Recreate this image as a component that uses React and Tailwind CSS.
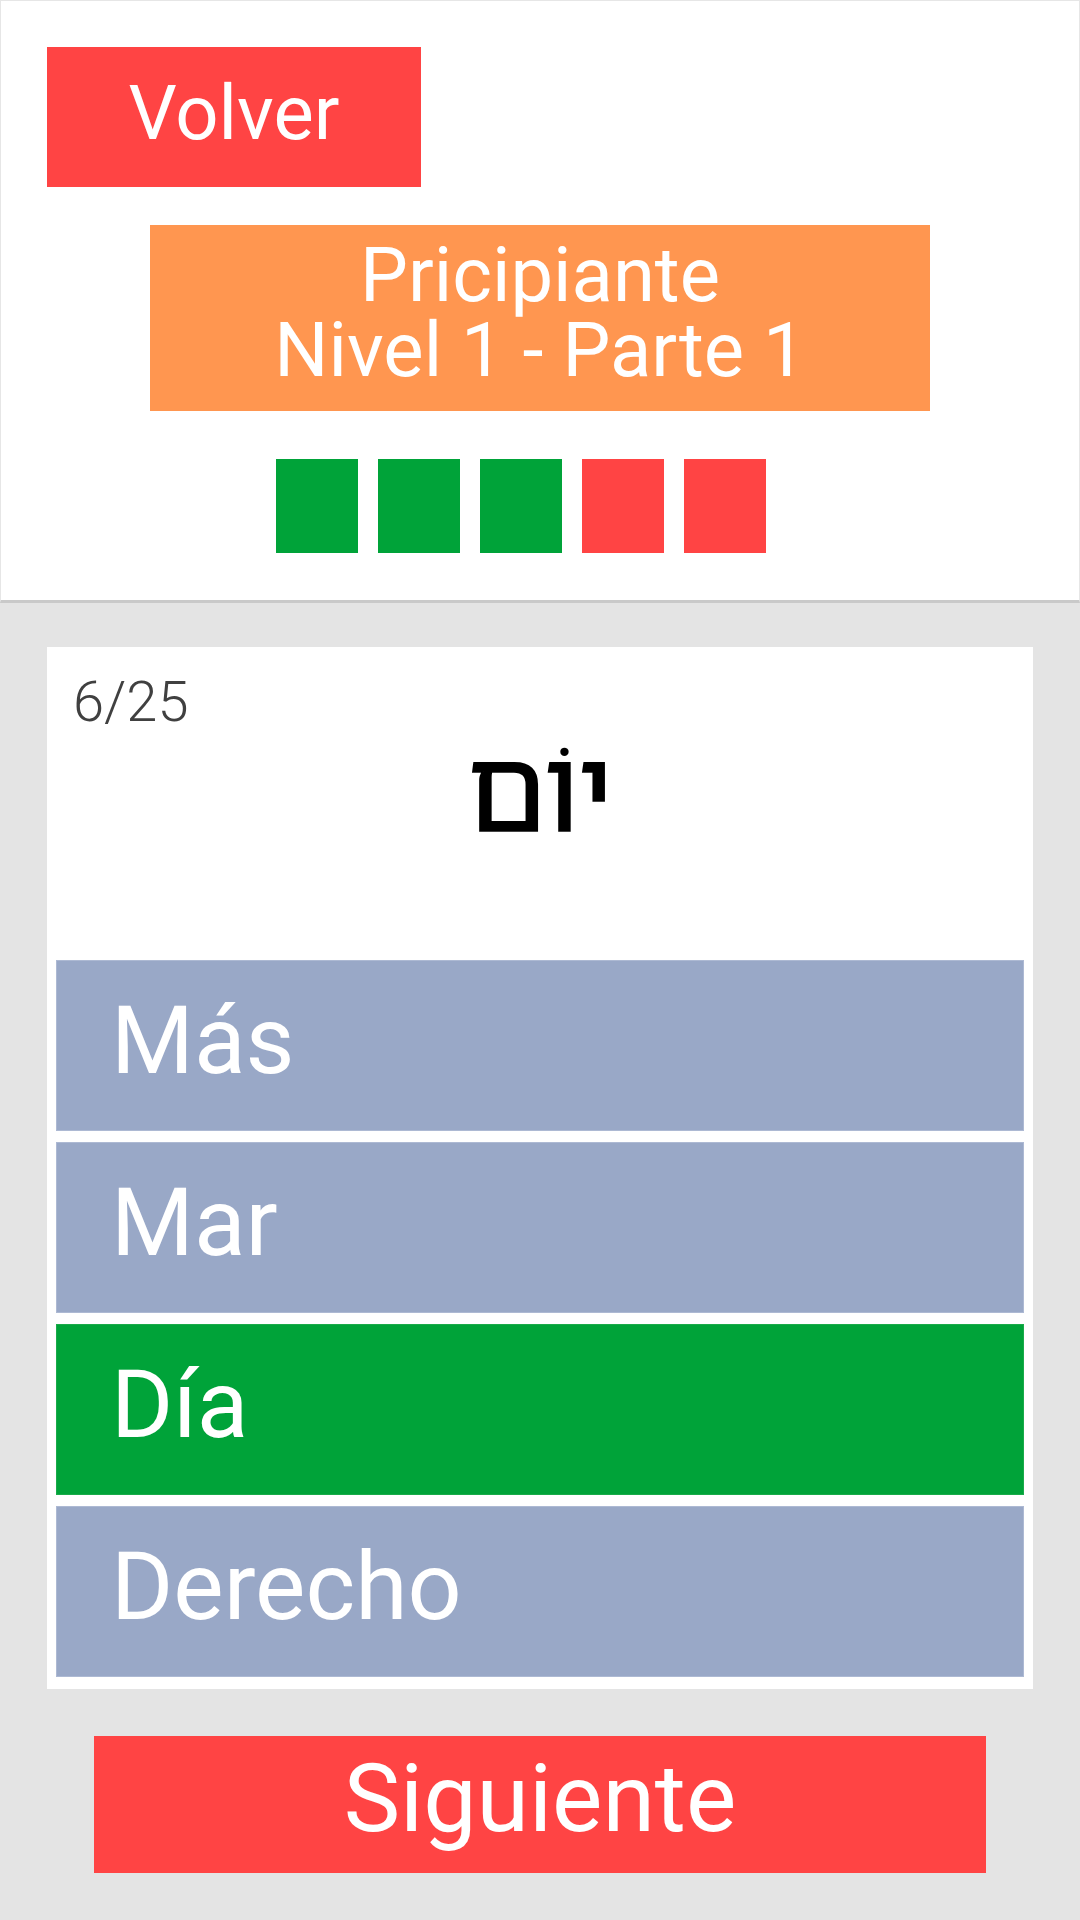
import React from "react";

const squares = ["bg-[#00a339]", "bg-[#00a339]", "bg-[#00a339]", "bg-[#ff4444]", "bg-[#ff4444]"];

const options = [
  { label: "Más", ok: false },
  { label: "Mar", ok: false },
  { label: "Día", ok: true },
  { label: "Derecho", ok: false },
];

export default function App() {
  return (
    <div className="w-[1080px] h-[1920px] flex flex-col bg-[#e4e4e4] font-['Roboto','Noto_Sans',sans-serif] overflow-hidden">
      {/* Header */}
      <div className="bg-white border border-[#e6e6e6] border-b-[3px] border-b-[#c9c9c9] px-[46px] pt-[46px] pb-[47px] flex flex-col">
        <div className="w-[374px] h-[140px] bg-[#ff4444] text-white text-[76px] leading-none flex items-center justify-center pb-[8px]">
          Volver
        </div>

        <div className="mt-[38px] mx-auto w-[780px] h-[186px] bg-[#ff9650] text-white text-[76px] leading-[75px] text-center pt-[13px]">
          <div>Pricipiante</div>
          <div>Nivel 1 - Parte 1</div>
        </div>

        <div className="mt-[48px] flex justify-center gap-[20px] pr-[38px]">
          {squares.map((c, i) => (
            <div key={i} className={`w-[82px] h-[94px] ${c}`} />
          ))}
        </div>
      </div>

      {/* Quiz */}
      <div className="px-[47px] pt-[44px] flex flex-col">
        <div className="bg-white h-[1042px] px-[9px] pb-[9px] flex flex-col">
          <div className="h-[313px] flex flex-col">
            <div className="pt-[27px] pl-[17px] text-[56px] leading-none font-light text-[#404040]">6/25</div>
            <div
              className="mt-[0px] text-center text-[114px] leading-none font-normal text-black font-['Noto_Sans_Hebrew','DejaVu_Sans',sans-serif] [-webkit-text-stroke:2px_black]"
              dir="rtl"
            >
              יוֹם
            </div>
          </div>

          <div className="flex flex-col gap-[11px]">
            {options.map((o) => (
              <div
                key={o.label}
                className={
                  o.ok
                    ? "h-[171px] bg-[#00a339] border border-[#1aab4a] text-white text-[95px] leading-none flex items-center pl-[54px] pb-[11px]"
                    : "h-[171px] bg-[#99a8c7] border border-[#adb9d3] text-white text-[95px] leading-none flex items-center pl-[54px] pb-[11px]"
                }
              >
                {o.label}
              </div>
            ))}
          </div>
        </div>

        <div className="mt-[47px] mx-auto w-[892px] h-[137px] bg-[#ff4444] text-white text-[95px] leading-none flex items-center justify-center pb-[12px]">
          Siguiente
        </div>
      </div>
    </div>
  );
}
